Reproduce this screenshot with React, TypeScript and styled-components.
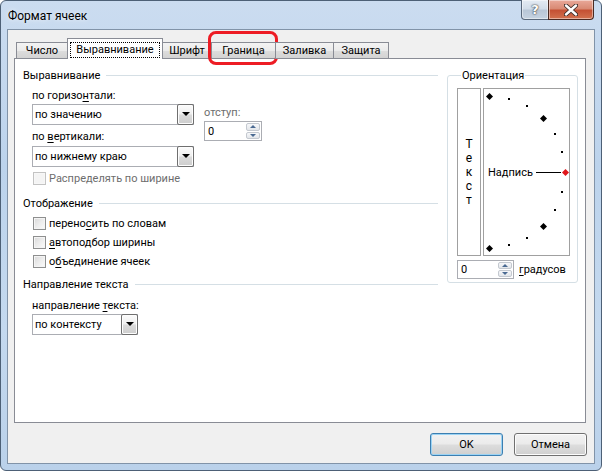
import React from 'react';
import styled, { createGlobalStyle } from 'styled-components';

const GlobalStyle = createGlobalStyle`
  html, body {
    margin: 0;
    padding: 0;
    background: #fff;
  }
  body {
    font-family: Roboto, "Liberation Sans", sans-serif;
    font-size: 11px;
    color: #000;
  }
  u {
    text-decoration: underline;
    text-underline-offset: 2px;
  }
`;

const Window = styled.div`
  box-sizing: border-box;
  width: 602px;
  height: 471px;
  border: 1px solid #4d6076;
  border-radius: 6px;
  background: linear-gradient(180deg, #cbdcf0 0%, #bcd3ec 35%, #c4d9ef 70%, #bad1ea 100%);
  padding: 0 6px 6px;
  display: flex;
  flex-direction: column;
`;

const TitleBar = styled.div`
  height: 28px;
  display: flex;
  justify-content: space-between;
  align-items: flex-start;
`;

const Title = styled.div`
  padding: 8px 0 0 1px;
  font-size: 12px;
  line-height: 15px;
  text-shadow: 0 0 5px rgba(255, 255, 255, 0.9);
`;

const CaptionButtons = styled.div`
  display: flex;
  margin: -1px 1px 0 0;
`;

const CaptionButton = styled.div<{ $close?: boolean }>`
  box-sizing: border-box;
  width: ${p => (p.$close ? 46 : 28)}px;
  height: 20px;
  border: 1px solid ${p => (p.$close ? '#4a2a22' : '#58677a')};
  border-top: none;
  border-radius: ${p => (p.$close ? '0 0 4px 0' : '0 0 0 4px')};
  margin-left: ${p => (p.$close ? -1 : 0)}px;
  background: ${p =>
    p.$close
      ? 'linear-gradient(180deg, #e9a99a 0%, #d98a74 45%, #c45134 55%, #d2724f 100%)'
      : 'linear-gradient(180deg, #e4ebf3 0%, #d3dde9 45%, #b9c7d7 55%, #c6d3e1 100%)'};
  box-shadow: inset 0 0 0 1px rgba(255, 255, 255, 0.45);
  display: flex;
  align-items: center;
  justify-content: center;
  color: #fff;
  font-family: "DejaVu Sans", sans-serif;
  font-weight: bold;
  font-size: 13px;
  text-shadow: 0 0 1px #333, 0 0 2px #333;
`;

const Client = styled.div`
  flex: 1;
  border: 1px solid #8193a8;
  background: #f0f0f0;
  padding: 8px 8px 7px 6px;
  display: flex;
  flex-direction: column;
`;

const TabStrip = styled.div`
  display: flex;
  align-items: flex-end;
  height: 21px;
  margin: 0 0 -1px 2px;
  position: relative;
  z-index: 1;
`;

const Tab = styled.div<{ $active?: boolean; $w: number }>`
  box-sizing: border-box;
  position: relative;
  width: ${p => p.$w}px;
  height: ${p => (p.$active ? 21 : 17)}px;
  margin-left: -1px;
  border: 1px solid #898c95;
  border-bottom: ${p => (p.$active ? 'none' : '1px solid #898c95')};
  background: ${p =>
    p.$active ? '#fff' : 'linear-gradient(180deg, #f3f3f3 0%, #ebebeb 50%, #dddddd 51%, #d3d3d3 100%)'};
  display: flex;
  justify-content: center;
  align-items: ${p => (p.$active ? 'flex-start' : 'center')};
  padding-top: ${p => (p.$active ? 3 : 0)}px;
  line-height: 14px;
  &:first-child {
    margin-left: 0;
  }
`;

const FocusBox = styled.span`
  border: 1px dotted #000;
  padding: 0 5px;
  line-height: 14px;
`;

const Marker = styled.div`
  position: absolute;
  left: -4px;
  right: -3px;
  top: -12px;
  bottom: -7px;
  border: 3px solid #ed1c24;
  border-radius: 8px;
  pointer-events: none;
`;

const Panel = styled.div`
  box-sizing: border-box;
  height: 365px;
  background: #fff;
  border: 1px solid #898c95;
  padding: 9px 7px 0 8px;
  display: flex;
  gap: 9px;
  align-items: flex-start;
`;

const LeftColumn = styled.div`
  width: 415px;
  display: flex;
  flex-direction: column;
`;

const GroupHeader = styled.div<{ $mt?: number }>`
  display: flex;
  align-items: center;
  line-height: 15px;
  margin-top: ${p => p.$mt ?? 0}px;
  &::after {
    content: '';
    flex: 1;
    height: 1px;
    background: #d5dfe5;
    margin-left: 6px;
  }
`;

const Indent = styled.div`
  padding-left: 9px;
  display: flex;
  flex-direction: column;
`;

const FieldRow = styled.div`
  display: flex;
  gap: 10px;
`;

const FieldColumn = styled.div`
  display: flex;
  flex-direction: column;
`;

const IndentColumn = styled.div`
  display: flex;
  flex-direction: column;
  padding-top: 22px;
`;

const Label = styled.div<{ $mt?: number; $muted?: boolean }>`
  line-height: 15px;
  margin-top: ${p => p.$mt ?? 0}px;
  color: ${p => (p.$muted ? '#6d6d6d' : '#000')};
  white-space: nowrap;
`;

const Combo = styled.div<{ $w: number; $mt?: number }>`
  box-sizing: border-box;
  width: ${p => p.$w}px;
  height: 21px;
  margin-top: ${p => p.$mt ?? 0}px;
  border: 1px solid #abadb3;
  background: #fff;
  display: flex;
  align-items: center;
  justify-content: space-between;
  padding-left: 2px;
`;

const DropButton = styled.div`
  box-sizing: border-box;
  width: 17px;
  height: 21px;
  margin: -1px -1px -1px 0;
  border: 1px solid #6f6f6f;
  border-radius: 2px;
  background: linear-gradient(180deg, #fbfbfb 0%, #f0f0f0 45%, #dadada 55%, #cdcdcd 100%);
  box-shadow: inset 0 0 0 1px #fdfdfd;
  display: flex;
  align-items: center;
  justify-content: center;
  &::after {
    content: '';
    margin-top: -2px;
    border-left: 4px solid transparent;
    border-right: 4px solid transparent;
    border-top: 4px solid #000;
  }
`;

const Spin = styled.div<{ $w: number; $h: number; $mt?: number }>`
  box-sizing: border-box;
  width: ${p => p.$w}px;
  height: ${p => p.$h}px;
  margin-top: ${p => p.$mt ?? 0}px;
  border: 1px solid #abadb3;
  background: #fff;
  display: flex;
  align-items: center;
  justify-content: space-between;
  padding: 1px 1px 1px 3px;
`;

const SpinButtons = styled.div`
  align-self: stretch;
  width: 14px;
  display: flex;
  flex-direction: column;
  gap: 1px;
`;

const SpinArrow = styled.div<{ $down?: boolean }>`
  flex: 1;
  border: 1px solid #c4c9d0;
  border-radius: 2px;
  background: linear-gradient(180deg, #f7f8fa, #e3e6ea);
  display: flex;
  align-items: center;
  justify-content: center;
  &::after {
    content: '';
    border-left: 3px solid transparent;
    border-right: 3px solid transparent;
    ${p => (p.$down ? 'border-top: 3px solid #4b6a92;' : 'border-bottom: 3px solid #4b6a92;')}
  }
`;

const CheckRow = styled.div<{ $mt?: number; $disabled?: boolean }>`
  display: flex;
  align-items: center;
  gap: 3px;
  margin: ${p => p.$mt ?? 0}px 0 0 1px;
  line-height: 15px;
  color: ${p => (p.$disabled ? '#6d6d6d' : '#000')};
`;

const CheckBox = styled.span<{ $disabled?: boolean }>`
  box-sizing: border-box;
  width: 13px;
  height: 13px;
  border: 1px solid ${p => (p.$disabled ? '#c3c3c3' : '#8e8f8f')};
  background: ${p =>
    p.$disabled ? '#f4f4f4' : 'linear-gradient(135deg, #d8d8d8 0%, #ececec 50%, #fbfbfb 100%)'};
  box-shadow: inset 0 0 0 1px ${p => (p.$disabled ? '#f7f7f7' : '#f4f4f4')};
`;

const Orientation = styled.fieldset`
  box-sizing: border-box;
  width: 131px;
  margin: 0;
  padding: 0 7px 3px 9px;
  border: 1px solid #d5dfe5;
  border-radius: 3px;
`;

const Legend = styled.legend`
  line-height: 15px;
  padding: 0 1px;
  margin-left: 4px;
`;

const Dials = styled.div`
  display: flex;
  gap: 2px;
  margin-top: 5px;
`;

const VerticalText = styled.div`
  box-sizing: border-box;
  width: 24px;
  height: 168px;
  border: 1px solid #a0a0a0;
  display: flex;
  flex-direction: column;
  align-items: center;
  justify-content: center;
  line-height: 14px;
  font-size: 12px;
`;

const ArcBox = styled.div`
  box-sizing: border-box;
  position: relative;
  width: 87px;
  height: 168px;
  border: 1px solid #a0a0a0;
  display: flex;
  align-items: center;
  padding-left: 4px;
`;

const ArcSvg = styled.svg`
  position: absolute;
  left: 0;
  top: 0;
`;

const Caption = styled.span`
  position: relative;
  line-height: 15px;
`;

const DegreeRow = styled.div`
  display: flex;
  align-items: center;
  gap: 5px;
  margin-top: 4px;
`;

const Footer = styled.div`
  display: flex;
  justify-content: flex-end;
  gap: 11px;
  margin: 10px -1px 0 0;
`;

const Button = styled.div<{ $default?: boolean }>`
  box-sizing: border-box;
  width: 73px;
  height: 23px;
  border: 1px solid ${p => (p.$default ? '#3c7fb1' : '#707070')};
  border-radius: 3px;
  background: linear-gradient(180deg, #f2f2f2 0%, #ebebeb 48%, #dddddd 52%, #cfcfcf 100%);
  box-shadow: inset 0 0 0 1px ${p => (p.$default ? '#9bd3f4' : '#fcfcfc')};
  display: flex;
  align-items: center;
  justify-content: center;
`;

const DOTS = [75, 60, 30, 15, -15, -30, -60, -75];
const DIAMONDS = [90, 45, 0, -45, -90];

const ArcMarks = () => {
  const cx = 5;
  const cy = 83;
  const r = 76;
  const pt = (a: number) => [
    Math.round(cx + r * Math.cos((a * Math.PI) / 180)),
    Math.round(cy - r * Math.sin((a * Math.PI) / 180)),
  ];
  return (
    <ArcSvg width="85" height="166" viewBox="0 0 85 166">
      {DOTS.map(a => {
        const [x, y] = pt(a);
        return <rect key={a} x={x - 1} y={y - 1} width="2" height="2" fill="#000" />;
      })}
      <line x1="52" y1="83.5" x2="77" y2="83.5" stroke="#000" />
      {DIAMONDS.map(a => {
        const [x, y] = pt(a);
        const cxp = x + 0.5;
        const cyp = y + 0.5;
        const d = `M${cxp} ${cyp - 3.5}L${cxp + 3.5} ${cyp}L${cxp} ${cyp + 3.5}L${cxp - 3.5} ${cyp}Z`;
        return <path key={a} d={d} fill={a === 0 ? '#e0161b' : '#000'} />;
      })}
    </ArcSvg>
  );
};

const TABS = [
  { name: 'Число', w: 52 },
  { name: 'Выравнивание', w: 96, active: true },
  { name: 'Шрифт', w: 50 },
  { name: 'Граница', w: 65, marked: true },
  { name: 'Заливка', w: 59 },
  { name: 'Защита', w: 56 },
];

export default function App() {
  return (
    <>
      <GlobalStyle />
      <Window>
        <TitleBar>
          <Title>Формат ячеек</Title>
          <CaptionButtons>
            <CaptionButton>?</CaptionButton>
            <CaptionButton $close>
              <svg width="14" height="12" viewBox="0 0 14 12">
                <path d="M2 1.5L12 10.5M12 1.5L2 10.5" stroke="#3a2a26" strokeWidth="4.2" strokeLinecap="round" />
                <path d="M2 1.5L12 10.5M12 1.5L2 10.5" stroke="#fff" strokeWidth="2.4" strokeLinecap="round" />
              </svg>
            </CaptionButton>
          </CaptionButtons>
        </TitleBar>

        <Client>
          <TabStrip>
            {TABS.map(t => (
              <Tab key={t.name} $w={t.w} $active={t.active}>
                {t.active ? <FocusBox>{t.name}</FocusBox> : t.name}
                {t.marked && <Marker />}
              </Tab>
            ))}
          </TabStrip>

          <Panel>
            <LeftColumn>
              <GroupHeader>Выравнивание</GroupHeader>
              <Indent>
                <FieldRow>
                  <FieldColumn>
                    <Label $mt={5}>
                      по горизо<u>н</u>тали:
                    </Label>
                    <Combo $w={162} $mt={1}>
                      по значению
                      <DropButton />
                    </Combo>
                    <Label $mt={4}>
                      по <u>в</u>ертикали:
                    </Label>
                    <Combo $w={162} $mt={2}>
                      по нижнему краю
                      <DropButton />
                    </Combo>
                  </FieldColumn>
                  <IndentColumn>
                    <Label $muted>отступ:</Label>
                    <Spin $w={58} $h={20} $mt={1}>
                      0
                      <SpinButtons>
                        <SpinArrow />
                        <SpinArrow $down />
                      </SpinButtons>
                    </Spin>
                  </IndentColumn>
                </FieldRow>
                <CheckRow $mt={4} $disabled>
                  <CheckBox $disabled />
                  <span>Распределять по ширине</span>
                </CheckRow>
              </Indent>

              <GroupHeader $mt={10}>Отображение</GroupHeader>
              <Indent>
                <CheckRow $mt={5}>
                  <CheckBox />
                  <span>
                    перено<u>с</u>ить по словам
                  </span>
                </CheckRow>
                <CheckRow $mt={4}>
                  <CheckBox />
                  <span>
                    <u>а</u>втоподбор ширины
                  </span>
                </CheckRow>
                <CheckRow $mt={4}>
                  <CheckBox />
                  <span>
                    о<u>б</u>ъединение ячеек
                  </span>
                </CheckRow>
              </Indent>

              <GroupHeader $mt={8}>Направление текста</GroupHeader>
              <Indent>
                <Label $mt={6}>
                  направление <u>т</u>екста:
                </Label>
                <Combo $w={106} $mt={1}>
                  по контексту
                  <DropButton />
                </Combo>
              </Indent>
            </LeftColumn>

            <Orientation>
              <Legend>Ориентация</Legend>
              <Dials>
                <VerticalText>
                  {'Текст'.split('').map((ch, i) => (
                    <span key={i}>{ch}</span>
                  ))}
                </VerticalText>
                <ArcBox>
                  <ArcMarks />
                  <Caption>Надпись</Caption>
                </ArcBox>
              </Dials>
              <DegreeRow>
                <Spin $w={57} $h={19}>
                  0
                  <SpinButtons>
                    <SpinArrow />
                    <SpinArrow $down />
                  </SpinButtons>
                </Spin>
                <span>
                  <u>г</u>радусов
                </span>
              </DegreeRow>
            </Orientation>
          </Panel>

          <Footer>
            <Button $default>OK</Button>
            <Button>Отмена</Button>
          </Footer>
        </Client>
      </Window>
    </>
  );
}
